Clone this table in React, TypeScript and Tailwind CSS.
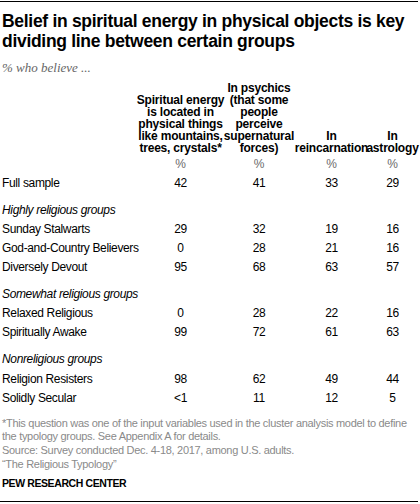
import React from "react";

const rows: { type: "row" | "section"; label: string; vals?: string[]; extra?: boolean }[] = [
  { type: "row", label: "Full sample", vals: ["42", "41", "33", "29"] },
  { type: "section", label: "Highly religious groups" },
  { type: "row", label: "Sunday Stalwarts", vals: ["29", "32", "19", "16"] },
  { type: "row", label: "God-and-Country Believers", vals: ["0", "28", "21", "16"] },
  { type: "row", label: "Diversely Devout", vals: ["95", "68", "63", "57"] },
  { type: "section", label: "Somewhat religious groups" },
  { type: "row", label: "Relaxed Religious", vals: ["0", "28", "22", "16"] },
  { type: "row", label: "Spiritually Awake", vals: ["99", "72", "61", "63"] },
  { type: "section", label: "Nonreligious groups", extra: true },
  { type: "row", label: "Religion Resisters", vals: ["98", "62", "49", "44"] },
  { type: "row", label: "Solidly Secular", vals: ["<1", "11", "12", "5"] },
];

const headers: string[][] = [
  ["Spiritual energy", "is located in", "physical things", "like mountains,", "trees, crystals*"],
  ["In psychics", "(that some", "people", "perceive", "supernatural", "forces)"],
  ["In", "reincarnation"],
  ["In", "astrology"],
];

const grid = "grid grid-cols-[141px_79px_78px_67px_55px]";

export default function App() {
  return (
    <div className="w-[420px] h-[504px] bg-white overflow-hidden font-['Liberation_Sans',sans-serif] text-black">
      <div className="pt-px">
        <div className="h-px bg-black w-[418px]" />
      </div>
      <div className="pl-[2px] pt-[9px] font-bold text-[17.5px] leading-[20px] tracking-[-0.3px] text-black whitespace-nowrap">
        Belief in spiritual energy in physical objects is key
        <br />
        dividing line between certain groups
      </div>
      <div className="pl-[2px] pt-[9px] font-['Liberation_Serif',serif] italic text-[13px] leading-[16px] text-[#666666]">
        % who believe ...
      </div>

      <div className={`${grid} mt-[6px] items-end`}>
        <div />
        {headers.map((h, i) => (
          <div key={i} className="flex flex-col items-center text-[12px] leading-[12px] font-bold tracking-[-0.2px]">
            {h.map((l, j) => (
              <span key={j} className="whitespace-nowrap">
                {l}
              </span>
            ))}
          </div>
        ))}
      </div>

      <div className={`${grid} mt-0 h-[19px] items-center text-[12px] text-[#6b6b6b]`}>
        <div />
        {[0, 1, 2, 3].map((i) => (
          <div key={i} className="flex justify-center">%</div>
        ))}
      </div>

      <div className="text-[12px] tracking-[-0.35px]">
        {rows.map((r, i) =>
          r.type === "section" ? (
            <div
              key={i}
              className={`pl-[2px] mt-[8px] flex items-center italic ${r.extra ? "h-[20.5px] pb-[1.5px]" : "h-[19px]"}`}
            >
              {r.label}
            </div>
          ) : (
            <div key={i} className={`${grid} h-[19px] items-center`}>
              <div className="pl-[2px] whitespace-nowrap">{r.label}</div>
              {r.vals!.map((v, j) => (
                <div key={j} className="flex justify-center">
                  {v}
                </div>
              ))}
            </div>
          )
        )}
      </div>

      <div className="pl-[2px] mt-[9px] text-[11px] leading-[13.7px] text-[#8a8a8a] tracking-[-0.3px] whitespace-nowrap">
        <div>
          *This question was one of the input variables used in the cluster analysis model to define
          <br />
          the typology groups. See Appendix A for details.
        </div>
        <div>Source: Survey conducted Dec. 4-18, 2017, among U.S. adults.</div>
        <div>“The Religious Typology”</div>
      </div>
      <div className="pl-[2px] mt-[5px] text-[10.5px] leading-[14px] font-bold tracking-[-0.4px]">
        PEW RESEARCH CENTER
      </div>
      <div className="mt-[11px] h-px bg-black w-[418px]" />
    </div>
  );
}
